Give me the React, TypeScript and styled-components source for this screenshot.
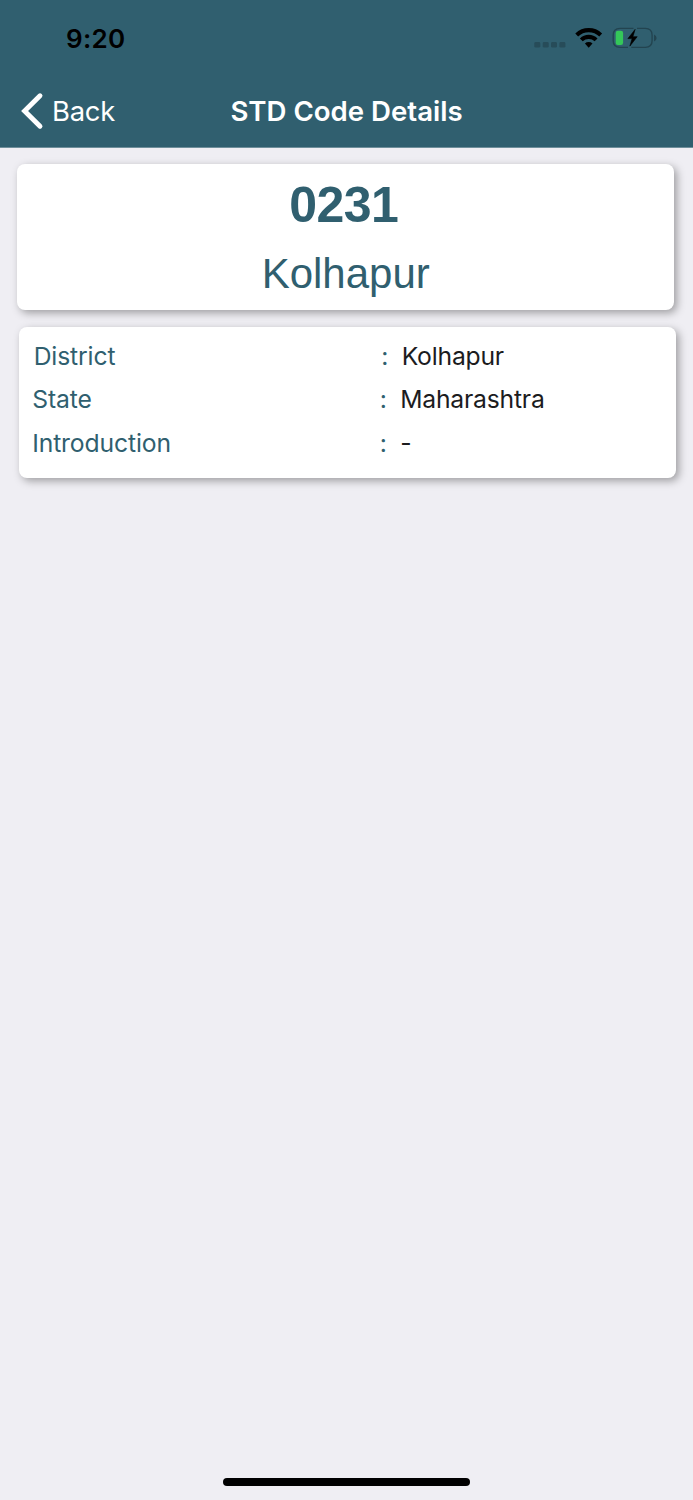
import React from "react";
import styled, { createGlobalStyle } from "styled-components";

const TEAL = "#305f6f";

const GlobalStyle = createGlobalStyle`
  * { box-sizing: border-box; }
  body { margin: 0; background: #efeef3; }
`;

const Screen = styled.div`
  height: 1500px;
  display: flex;
  flex-direction: column;
  background: #efeef3;
  font-family: Inter, "Liberation Sans", sans-serif;
  overflow: hidden;
`;

const Header = styled.header`
  height: 148px;
  flex: none;
  background: ${TEAL};
  border-bottom: 1px solid #6f8f9b;
`;

const StatusBar = styled.div`
  height: 74px;
  display: flex;
  justify-content: space-between;
  padding: 22px 36px 0 66px;
`;

const Time = styled.span`
  font-size: 26px;
  line-height: 33px;
  font-weight: 600;
  letter-spacing: 0.3px;
  color: #000;
`;

const StatusIcons = styled.svg`
  width: 124px;
  height: 30px;
`;

const NavBar = styled.nav`
  height: 73px;
  display: grid;
  grid-template-columns: 1fr auto 1fr;
  align-items: center;
`;

const BackButton = styled.div`
  display: flex;
  align-items: center;
  gap: 8px;
  padding-left: 20px;
  color: #fff;
  font-size: 27.4px;
  line-height: 34px;
  letter-spacing: -0.25px;
`;

const Title = styled.h1`
  margin: 0;
  color: #fff;
  font-size: 27.6px;
  line-height: 34px;
  font-weight: 600;
`;

const Content = styled.main`
  flex: 1;
  padding: 16px 17px 0;
`;

const Card = styled.section<{ $shift?: boolean }>`
  width: 657.4px;
  margin-left: ${(p) => (p.$shift ? "1.6px" : "0")};
  background: #fff;
  border-radius: 8px;
  box-shadow: 3px 3px 9px rgba(0, 0, 0, 0.34);
`;

const CodeCard = styled(Card)`
  height: 146px;
  margin-bottom: 17px;
  padding-top: 12px;
  text-align: center;
  color: ${TEAL};
  font-family: "Liberation Sans", sans-serif;
`;

const Code = styled.div`
  padding-right: 4px;
  font-size: 50px;
  line-height: 58px;
  font-weight: 700;
  letter-spacing: -0.6px;
`;

const Place = styled.div`
  margin-top: 15px;
  font-size: 42px;
  line-height: 49px;
`;

const DetailCard = styled(Card)`
  height: 150.5px;
  padding: 7.5px 0 0 13.6px;
`;

const Row = styled.div<{ $indent?: boolean }>`
  display: grid;
  grid-template-columns: 347.5px 20.5px 1fr;
  height: 43.5px;
  line-height: 43px;
  padding-left: ${(p) => (p.$indent ? "1.5px" : "0")};
  font-size: 24.7px;
  letter-spacing: -0.13px;
  color: ${TEAL};
`;

const Value = styled.span`
  color: #1c1c1e;
  letter-spacing: -0.2px;
`;

const HomeArea = styled.footer`
  height: 22px;
  display: flex;
  justify-content: center;
`;

const HomeBar = styled.div`
  width: 247px;
  height: 8px;
  border-radius: 4px;
  background: #000;
`;

const details = [
  { label: "District", value: "Kolhapur" },
  { label: "State", value: "Maharashtra" },
  { label: "Introduction", value: "-" },
];

export default function App() {
  return (
    <Screen>
      <GlobalStyle />
      <Header>
        <StatusBar>
          <Time>9:20</Time>
          <StatusIcons viewBox="533 22 124 30">
            <g fill="#274c59">
              <rect x="534.3" y="42" width="6" height="5.6" rx="1.4" />
              <rect x="542.7" y="42" width="6" height="5.6" rx="1.4" />
              <rect x="551" y="42" width="6" height="5.6" rx="1.4" />
              <rect x="559.4" y="42" width="6" height="5.6" rx="1.4" />
            </g>
            <g fill="none" stroke="#000" strokeWidth="4.1">
              <path d="M576.7 34.9a17.4 17.4 0 0 1 24 0" />
              <path d="M581.3 39.9a10.6 10.6 0 0 1 14.8 0" />
            </g>
            <path d="M584.9 43.6a5.6 5.6 0 0 1 7.6 0l-3.8 4.1z" fill="#000" />
            <g fill="none" stroke="#234450" strokeWidth="1.4">
              <path d="M633.5 28.4H620q-6.8 0-6.8 6.8v5.4q0 6.8 6.8 6.8h8" />
              <path d="M637 28.4h8.3q6.8 0 6.8 6.8v5.4q0 6.8-6.8 6.8h-14" />
            </g>
            <path d="M654 34.4q2.6 1 2.6 3.5t-2.6 3.5z" fill="#234450" />
            <rect x="615.7" y="30.8" width="7.4" height="14.2" rx="2.2" fill="#34c759" />
            <path
              d="M635.1 29.4L627.9 38.6h4.2l-2.2 7.5 7.3-9.4h-4.3z"
              fill="#000"
              stroke="#000"
              strokeWidth="0.6"
              strokeLinejoin="round"
            />
          </StatusIcons>
        </StatusBar>
        <NavBar>
          <BackButton>
            <svg width="24" height="38" viewBox="20 92 24 38">
              <path
                d="M40 95.8L24.6 111 40 126.2"
                fill="none"
                stroke="#fff"
                strokeWidth="4.9"
                strokeLinecap="round"
                strokeLinejoin="miter"
              />
            </svg>
            <span>Back</span>
          </BackButton>
          <Title>STD Code Details</Title>
        </NavBar>
      </Header>
      <Content>
        <CodeCard>
          <Code>0231</Code>
          <Place>Kolhapur</Place>
        </CodeCard>
        <DetailCard $shift>
          {details.map((d, i) => (
            <Row key={d.label} $indent={i === 0}>
              <span>{d.label}</span>
              <span>:</span>
              <Value>{d.value}</Value>
            </Row>
          ))}
        </DetailCard>
      </Content>
      <HomeArea>
        <HomeBar />
      </HomeArea>
    </Screen>
  );
}
